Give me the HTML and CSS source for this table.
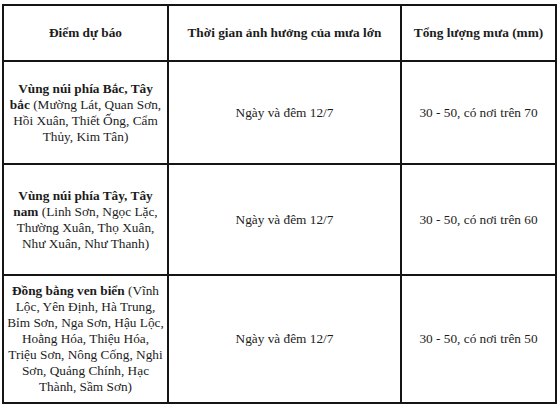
FILE: index.html
```html
<!DOCTYPE html>
<html lang="vi">
<head>
<meta charset="utf-8">
<link rel="stylesheet" href="styles.css">
</head>
<body>
<table class="forecast">
  <colgroup>
    <col class="c1">
    <col class="c2">
    <col class="c3">
  </colgroup>
  <tr class="head">
    <th>Điểm dự báo</th>
    <th>Thời gian ảnh hưởng của mưa lớn</th>
    <th>Tổng lượng mưa (mm)</th>
  </tr>
  <tr class="r1">
    <td class="place"><b>Vùng núi phía Bắc, Tây bắc</b> (Mường Lát, Quan Sơn, Hồi Xuân, Thiết Ống, Cẩm Thủy, Kim Tân)</td>
    <td>Ngày và đêm 12/7</td>
    <td>30 - 50, có nơi trên 70</td>
  </tr>
  <tr class="r2">
    <td class="place"><b>Vùng núi phía Tây, Tây nam</b> (Linh Sơn, Ngọc Lặc, Thường Xuân, Thọ Xuân, Như Xuân, Như Thanh)</td>
    <td>Ngày và đêm 12/7</td>
    <td>30 - 50, có nơi trên 60</td>
  </tr>
  <tr class="r3">
    <td class="place"><b>Đồng bằng ven biển</b> (Vĩnh Lộc, Yên Định, Hà Trung, Bỉm Sơn, Nga Sơn, Hậu Lộc, Hoằng Hóa, Thiệu Hóa, Triệu Sơn, Nông Cống, Nghi Sơn, Quảng Chính, Hạc Thành, Sầm Sơn)</td>
    <td>Ngày và đêm 12/7</td>
    <td>30 - 50, có nơi trên 50</td>
  </tr>
</table>
</body>
</html>
```

FILE: styles.css
```css
html, body {
  margin: 0;
  background: #ffffff;
}
body {
  padding: 4px 0 0 2px;
  font-family: "Liberation Serif", "Times New Roman", serif;
  font-size: 13.3px;
  color: #1c1c1c;
}
.forecast {
  border-collapse: collapse;
  width: 553px;
  table-layout: fixed;
}
.c1 { width: 165px; }
.c2 { width: 233px; }
.c3 { width: 155px; }
.forecast th,
.forecast td {
  border: 2px solid #151515;
  text-align: center;
  vertical-align: middle;
  padding: 0 3px;
  line-height: 16px;
}
.forecast th {
  font-weight: bold;
}
.head th { height: 54px; }
.r1 td { height: 101px; }
.r2 td { height: 109px; }
.r3 td { height: 126px; }
.place b { font-weight: bold; }
```
